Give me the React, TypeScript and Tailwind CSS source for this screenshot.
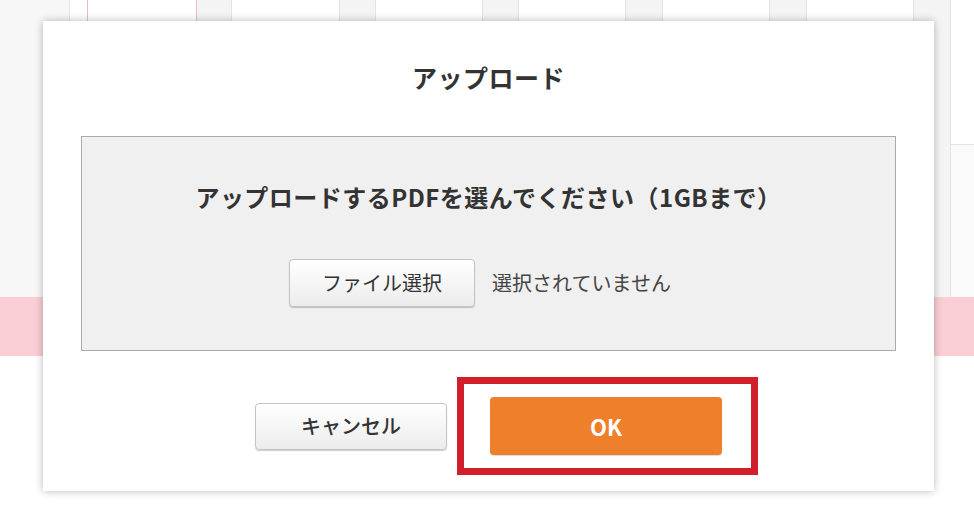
import React from "react";

const columns = [
  { w: "w-[70px]", cls: "bg-[#f7f7f7] border-r border-[#e6e6e6]" },
  { w: "w-[18px]", cls: "bg-white border-r border-[#f2b8c2]" },
  { w: "w-[109px]", cls: "bg-white border-r border-[#f2b8c2]" },
  { w: "w-[35px]", cls: "bg-[#f4f4f4] border-r border-[#e3e3e3]" },
  { w: "w-[108px]", cls: "bg-white border-r border-[#e3e3e3]" },
  { w: "w-[36px]", cls: "bg-[#f4f4f4] border-r border-[#e3e3e3]" },
  { w: "w-[107px]", cls: "bg-white border-r border-[#e3e3e3]" },
  { w: "w-[36px]", cls: "bg-[#f4f4f4] border-r border-[#e3e3e3]" },
  { w: "w-[107px]", cls: "bg-white border-r border-[#e3e3e3]" },
  { w: "w-[37px]", cls: "bg-[#f4f4f4] border-r border-[#e3e3e3]" },
  { w: "w-[107px]", cls: "bg-white border-r border-[#e3e3e3]" },
  { w: "w-[37px]", cls: "bg-[#f4f4f4] border-r border-[#e3e3e3]" },
  { w: "w-[107px]", cls: "bg-white border-r border-[#e3e3e3]" },
  { w: "w-[37px]", cls: "bg-[#f4f4f4] border-r border-[#e3e3e3]" },
];

export default function App() {
  return (
    <main
      className="relative w-[974px] h-[508px] overflow-hidden bg-[#fafafa] text-[#333]"
      style={{ fontFamily: '"Noto Sans CJK JP", "Noto Sans", sans-serif' }}
    >
      {/* Background page */}
      <div className="flex flex-col h-full">
        <div className="flex h-[297px]">
          {columns.map((c, i) => (
            <div key={i} className={`${c.w} h-full shrink-0 ${c.cls}`} />
          ))}
          <div className="flex-1 flex flex-col">
            <div className="h-[145px] bg-white border-b border-[#e3e3e3]" />
            <div className="flex-1 bg-[#fafafa]" />
          </div>
        </div>
        <div className="h-[59px] bg-[#f9ced4]" />
        <div className="flex-1 bg-white" />
      </div>

      {/* Upload dialog */}
      <div className="absolute left-[43px] top-[21px] w-[891px] h-[470px] bg-white shadow-[0_0_8px_rgba(0,0,0,0.28)] flex flex-col items-center">
        <h2 className="pt-10 text-[25px] leading-8 font-bold tracking-[0.02em]">アップロード</h2>

        <div className="mt-[43px] w-[815px] h-[215px] bg-[#f0f0f0] border border-[#aaaaaa] flex flex-col items-center">
          <p className="pt-[44px] text-[24px] leading-8 font-bold tracking-[0.02em]">
            アップロードするPDFを選んでください（1GBまで）
          </p>
          <div className="mt-[46px] flex items-center gap-[17px] pr-[17px]">
            <button className="w-[186px] h-[48px] rounded-[4px] border border-[#c4c4c4] bg-gradient-to-b from-white to-[#ececec] shadow-[0_1px_1px_rgba(0,0,0,0.2)] text-[20px] text-[#333]">
              ファイル選択
            </button>
            <span className="text-[20px] text-[#444]">選択されていません</span>
          </div>
        </div>

        <div className="mt-[46px] flex items-center gap-[43px] h-[58px]">
          <button className="w-[192px] h-[47px] rounded-[4px] border border-[#c4c4c4] bg-gradient-to-b from-white to-[#ececec] shadow-[0_1px_1px_rgba(0,0,0,0.2)] text-[20px] font-medium text-[#333]">
            キャンセル
          </button>
          <div className="relative">
            <button className="w-[232px] h-[58px] rounded-[4px] bg-[#ee7f2b] shadow-[0_1px_1px_rgba(0,0,0,0.15)] text-[22px] font-bold text-white">
              OK
            </button>
            <div className="absolute -left-[33px] -right-[36px] -top-[20px] -bottom-[20px] border-[7px] border-[#d11f2b]" />
          </div>
        </div>
      </div>
    </main>
  );
}
